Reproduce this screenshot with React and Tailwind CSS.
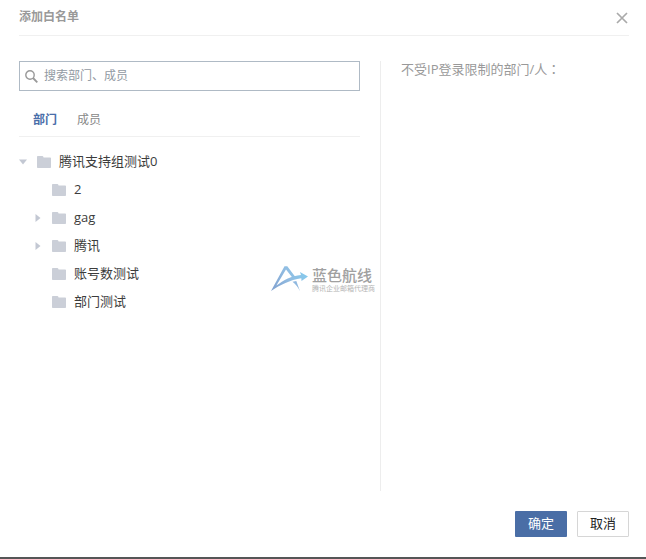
const departments = [
  { name: '2', expandable: false },
  { name: 'gag', expandable: true },
  { name: '腾讯', expandable: true },
  { name: '账号数测试', expandable: false },
  { name: '部门测试', expandable: false },
];

function FolderIcon() {
  return (
    <svg width="14" height="12" viewBox="0 0 14 12" className="shrink-0" aria-hidden="true">
      <path d="M0 .8Q0 0 .8 0H5.4Q6 0 6.2.6L6.600 1.500H13.2Q14 1.500 14 2.300V11.200Q14 12 13.200 12H.8Q0 12 0 11.200Z" fill="#cbcfd8" />
    </svg>
  );
}

function Toggle({ open, label }) {
  return (
    <button type="button" aria-label={label} aria-expanded={open} className="flex w-2 shrink-0 justify-center">
      <svg width="8" height="8" viewBox="0 0 8 8" aria-hidden="true">
        <path d={open ? 'M0 1.500H8L4 6.500Z' : 'M1.500 0V8L6.500 4Z'} fill="#c3c8d3" />
      </svg>
    </button>
  );
}

function TreeLabel({ children }) {
  return (
    <>
      <FolderIcon />
      <span className="ml-2">{children}</span>
    </>
  );
}

function Watermark() {
  return (
    <div className="pointer-events-none absolute left-1/2 top-1/2 flex -translate-x-1/2 -translate-y-1/2 items-center gap-1">
      <svg width="37" height="28" viewBox="0 0 37 28" fill="none" aria-hidden="true">
        <defs>
          <linearGradient id="wing" x1="0" y1="27" x2="37" y2="8" gradientUnits="userSpaceOnUse">
            <stop stopColor="#7f9fce" />
            <stop offset=".55" stopColor="#92bde2" />
            <stop offset="1" stopColor="#84cbee" />
          </linearGradient>
        </defs>
        <path d="M0 26L13.500 1.200H16.300L25.500 13.500L22.800 14.400L15 4.600L5.400 20.600C12.500 15 20.500 10.800 30 9.900L29 7L37 11.500L30.500 16L30.300 13.200C19 15 9.500 19.600 0 26Z" fill="url(#wing)" />
        <path d="M21.500 16.800L25.300 16L29 26.200C27.200 22.500 24.700 19.200 21.500 16.800Z" fill="#8fb8df" />
      </svg>
      <div className="whitespace-nowrap">
        <div className="text-[15px] font-medium leading-5 text-[#a0a0a0]">蓝色航线</div>
        <div className="text-[7px] leading-2 text-[#b4b4b4]">腾讯企业邮箱代理商</div>
      </div>
    </div>
  );
}

export default function App() {
  return (
    <div className="relative flex min-h-screen flex-col border-b-2 border-[#555657] bg-white pl-[19px] pr-[17px] font-['Open_Sans','Noto_Sans_CJK_SC',sans-serif] text-[13px] text-[#3c3c3c]">
      <header className="flex h-9 items-center justify-between border-b border-[#f0f0f0]">
        <h1 className="pb-0.5 text-xs font-bold text-[#999]">添加白名单</h1>
        <button type="button" aria-label="关闭">
          <svg width="14" height="12" viewBox="0 0 14 12" aria-hidden="true">
            <path d="M2 1L12 11M12 1L2 11" stroke="#aaa" strokeWidth="1.700" />
          </svg>
        </button>
      </header>

      <main className="grid flex-1 grid-cols-[361fr_249fr] pt-[25px]">
        <section className="pr-5">
          <label className="flex h-[30px] items-center border border-[#afbac5] pl-[5px]">
            <svg width="13" height="13" viewBox="0 0 13 13" fill="none" stroke="#999" className="shrink-0" aria-hidden="true">
              <circle cx="5" cy="5" r="4.200" strokeWidth="1.400" />
              <path d="M8 8L12.300 12.300" strokeWidth="1.800" />
            </svg>
            <input
              type="text"
              aria-label="搜索部门、成员"
              placeholder="搜索部门、成员"
              className="ml-1.5 min-w-0 flex-1 text-xs outline-none placeholder:text-[#929aa3]"
            />
          </label>

          <div role="tablist" className="flex h-[46px] items-center gap-5 border-b border-[#f0f0f0] px-3.5 pt-3 text-xs">
            <button type="button" role="tab" aria-selected="true" className="font-bold text-[#4a6ea9]">部门</button>
            <button type="button" role="tab" aria-selected="false" className="text-[#888]">成员</button>
          </div>

          <ul className="pt-[11px]">
            <li>
              <div className="flex h-7 items-center">
                <Toggle open label="收起 腾讯支持组测试0" />
                <span className="ml-2.5 flex items-center"><TreeLabel>腾讯支持组测试0</TreeLabel></span>
              </div>
              <ul className="pl-[15px]">
                {departments.map(({ name, expandable }) => (
                  <li key={name} className="flex h-7 items-center">
                    {expandable ? <Toggle open={false} label={`展开 ${name}`} /> : <span className="w-2" />}
                    <span className="ml-2.5 flex items-center"><TreeLabel>{name}</TreeLabel></span>
                  </li>
                ))}
              </ul>
            </li>
          </ul>
        </section>

        <section className="border-l border-[#ededed] pl-5">
          <h2 className="leading-4 text-[#999]">
            不受IP登录限制的部门/人<span lang="zh-TW" className="font-['Noto_Sans_CJK_TC',sans-serif]">：</span>
          </h2>
        </section>
      </main>

      <footer className="flex justify-end gap-2.5 py-5">
        <button type="button" className="h-[26px] w-[52px] rounded-[1px] bg-[#4a6ea6] text-white">确定</button>
        <button type="button" className="h-[26px] w-[52px] rounded-[1px] border border-[#d6d6d6] bg-white text-[#222]">取消</button>
      </footer>

      <Watermark />
    </div>
  );
}
